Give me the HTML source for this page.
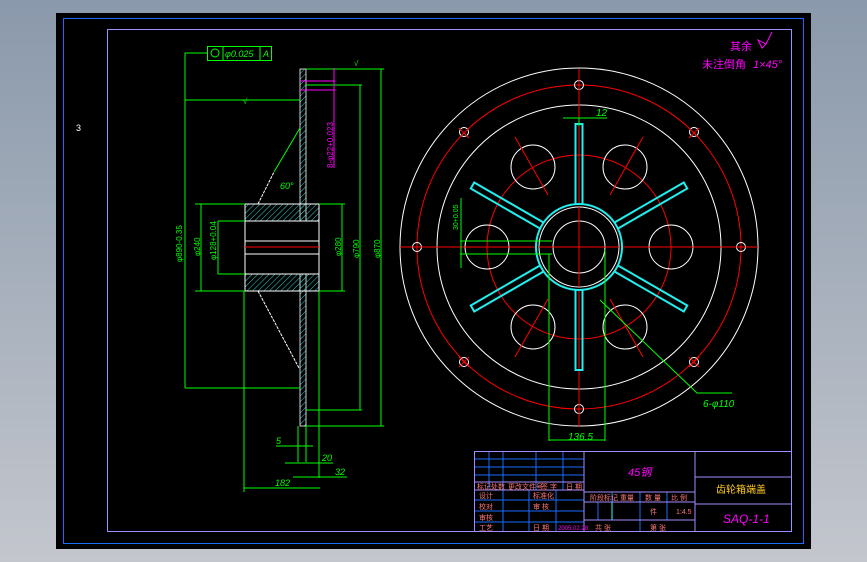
<!DOCTYPE html>
<html><head><meta charset="utf-8"><style>
html,body{margin:0;padding:0}
body{width:867px;height:562px;overflow:hidden;background:linear-gradient(#8a99ab,#c3c6cd)}
svg{position:absolute;left:0;top:0}
text{font-family:"Liberation Sans","Noto Sans CJK SC",sans-serif}
</style></head><body>
<svg width="867" height="562" viewBox="0 0 867 562">
<defs>
<pattern id="h" width="4" height="4" patternUnits="userSpaceOnUse" patternTransform="rotate(45)">
<line x1="0" y1="0" x2="0" y2="4" stroke="#3cc" stroke-width="1"/></pattern>
</defs>
<rect x="56" y="13" width="755" height="536" fill="#000"/>
<rect x="63.5" y="18.5" width="740" height="525" fill="none" stroke="#1a6cff" stroke-width="1"/>
<rect x="107.5" y="29.5" width="684" height="502" fill="none" stroke="#a28cff" stroke-width="1"/>
<text x="76" y="131" fill="#fff" font-size="9">3</text>

<!-- notes -->
<text x="730" y="50" fill="#f0f" font-size="11">其余</text>
<path d="M758 40 l4 8 l4 -4 z M766 44 l6 -12" stroke="#f0f" fill="none"/>
<text x="702" y="68" fill="#f0f" font-size="11">未注倒角</text>
<text x="753" y="68" fill="#f0f" font-size="11" font-style="italic">1×45°</text>

<!-- RIGHT VIEW -->
<g fill="none">
<circle cx="579" cy="247" r="179" stroke="#fff"/>
<circle cx="579" cy="247" r="162" stroke="#f00"/>
<circle cx="579" cy="247" r="142" stroke="#fff"/>
<circle cx="579" cy="247" r="92" stroke="#f00"/>
<g stroke="#fff">
<circle cx="671" cy="247" r="22"/><circle cx="487" cy="247" r="22"/>
<circle cx="533" cy="167" r="22"/><circle cx="625" cy="167" r="22"/>
<circle cx="533" cy="327" r="22"/><circle cx="625" cy="327" r="22"/>
<circle cx="579" cy="85" r="4.5"/><circle cx="579" cy="409" r="4.5"/>
<circle cx="417" cy="247" r="4.5"/><circle cx="741" cy="247" r="4.5"/>
<circle cx="464" cy="132" r="4.5"/><circle cx="694" cy="132" r="4.5"/>
<circle cx="464" cy="362" r="4.5"/><circle cx="694" cy="362" r="4.5"/>
</g>
<g stroke="#f00">
<line x1="400" y1="247" x2="758" y2="247"/>
<line x1="579" y1="69" x2="579" y2="427"/>
<line x1="515" y1="137" x2="548" y2="195"/>
<line x1="643" y1="137" x2="610" y2="195"/>
<line x1="515" y1="357" x2="548" y2="299"/>
<line x1="643" y1="357" x2="610" y2="299"/>
<path d="M459 128 l10 10 M469 128 l-10 10 M689 128 l10 10 M699 128 l-10 10 M459 357 l10 10 M469 357 l-10 10 M689 357 l10 10 M699 357 l-10 10"/>
</g>
<g stroke="#2ee" stroke-width="2">
<g transform="translate(579 247)">
<rect x="40" y="-3.5" width="83" height="7" transform="rotate(-90)"/>
<rect x="40" y="-3.5" width="83" height="7" transform="rotate(90)"/>
<rect x="40" y="-3.5" width="83" height="7" transform="rotate(-30)"/>
<rect x="40" y="-3.5" width="83" height="7" transform="rotate(30)"/>
<rect x="40" y="-3.5" width="83" height="7" transform="rotate(150)"/>
<rect x="40" y="-3.5" width="83" height="7" transform="rotate(210)"/>
</g>
<circle cx="579" cy="247" r="43" fill="#000"/>
</g>
<circle cx="579" cy="247" r="40" stroke="#fff"/>
<circle cx="579" cy="247" r="26" stroke="#fff"/>
<line x1="539" y1="247" x2="619" y2="247" stroke="#f00"/>
<line x1="579" y1="207" x2="579" y2="287" stroke="#f00"/>
<g stroke="#0f0">
<path d="M460 241 H552 M460 254 H552 M461 198 V268"/>
<path d="M549 254 V441 M605 250 V441 M549 440 H605"/>
<path d="M563 118 H607 M579 118 V126"/>
<path d="M600 300 L697 393 H732"/>
</g>
</g>
<text x="568" y="440" fill="#0f0" font-size="10" font-style="italic">136.5</text>
<text x="596" y="116" fill="#0f0" font-size="10" font-style="italic">12</text>
<text x="703" y="407" fill="#0f0" font-size="10" font-style="italic">6-φ110</text>
<text transform="translate(458 230) rotate(-90)" fill="#0f0" font-size="7">30+0.05</text>

<!-- LEFT VIEW -->
<g fill="none">
<rect x="300" y="69" width="6" height="357" fill="url(#h)" stroke="#fff" stroke-width="0.8"/>
<rect x="245" y="204" width="74" height="17" fill="url(#h)" stroke="#fff"/>
<rect x="245" y="274" width="74" height="17" fill="url(#h)" stroke="#fff"/>
<rect x="245" y="221" width="74" height="53" fill="#000" stroke="#fff"/>
<path d="M245 241 H319 M245 254 H319" stroke="#fff"/>
<line x1="245" y1="247" x2="319" y2="247" stroke="#f00"/>
<path d="M258 204 L274 172 M258 291 L299 368" stroke="#fff" stroke-dasharray="3 1"/>
<g stroke="#0f0">
<path d="M274 172 L300 128"/>
<path d="M207 53 H185 V388 M185 100 H300 M185 388 H300"/>
<path d="M201 204 V291 M195 204 H245 M195 291 H245"/>
<path d="M218 221 V274 M218 221 H245 M218 274 H245"/>
<path d="M342 204 V291 M319 204 H345 M319 291 H345"/>
<path d="M360 85 V410 M306 85 H362 M306 410 H362"/>
<path d="M381 69 V426 M306 69 H384 M306 426 H384"/>
<path d="M244 291 V492 M319 291 V478 M244 488 H320"/>
<path d="M298 426 V462 M306 426 V462"/>
<path d="M276 446 H313 M285 463 H333 M293 477 H347"/>
<rect x="207.5" y="46.5" width="64" height="14"/>
<path d="M223 47 V60 M260 47 V60"/>
</g>
<path d="M300 81 H335 M300 90 H335 M334 68 V168" stroke="#f0f"/>
</g>
<text x="225" y="57" fill="#0f0" font-size="9" font-style="italic">φ0.025</text>
<text x="263" y="57" fill="#0f0" font-size="9" font-style="italic">A</text>
<circle cx="215" cy="53" r="4" fill="none" stroke="#0f0"/>
<text x="243" y="104" fill="#0f0" font-size="8">√</text>
<text x="354" y="66" fill="#0f0" font-size="8">√</text>
<text x="280" y="189" fill="#0f0" font-size="9" font-style="italic">60°</text>
<text transform="translate(182 262) rotate(-90)" fill="#0f0" font-size="8">φ890-0.35</text>
<text transform="translate(200 256) rotate(-90)" fill="#0f0" font-size="8">φ240</text>
<text transform="translate(216 260) rotate(-90)" fill="#0f0" font-size="8">φ128+0.04</text>
<text transform="translate(341 256) rotate(-90)" fill="#0f0" font-size="8">φ280</text>
<text transform="translate(359 258) rotate(-90)" fill="#0f0" font-size="8">φ790</text>
<text transform="translate(380 258) rotate(-90)" fill="#0f0" font-size="8">φ870</text>
<text transform="translate(333 168) rotate(-90)" fill="#f0f" font-size="8">8-φ22+0.023</text>
<text x="276" y="444" fill="#0f0" font-size="9" font-style="italic">5</text>
<text x="322" y="461" fill="#0f0" font-size="9" font-style="italic">20</text>
<text x="335" y="475" fill="#0f0" font-size="9" font-style="italic">32</text>
<text x="275" y="486" fill="#0f0" font-size="9" font-style="italic">182</text>

<!-- TITLE BLOCK -->
<g fill="none" stroke-width="1">
<g stroke="#1a6cff">
<path d="M474 459 H584 M474 467 H584 M474 475 H584 M474 500 H584 M474 511 H584 M474 522 H584"/>
<path d="M489 451 V490 M503 451 V532 M536 451 V490 M563 451 V490 M529 490 V532 M556 490 V532"/>
<path d="M598 502 V520 M640 492 V532 M667 492 V520 M612 492 V502"/>
</g>
<line x1="612" y1="502" x2="612" y2="520" stroke="#2ff"/>
<g stroke="#a28cff">
<rect x="474.5" y="451.5" width="317" height="80"/>
<path d="M474 482 H584 M474 490 H584 M584 451 V532 M695 451 V532 M584 492 H695 M584 502 H695 M584 520 H695 M695 477 H791 M695 504 H791"/>
</g>
</g>
<g fill="#f77" font-size="7">
<text x="477" y="489">标记</text><text x="491" y="489">处数</text><text x="508" y="489">更改文件号</text><text x="541" y="489">签 字</text><text x="566" y="489">日 期</text>
<text x="479" y="498">设计</text><text x="533" y="498">标准化</text>
<text x="479" y="509">校对</text><text x="533" y="509">审 核</text>
<text x="479" y="520">审核</text>
<text x="479" y="530">工艺</text><text x="533" y="530">日 期</text>
<text x="590" y="500">阶段标记</text><text x="620" y="500">重量</text><text x="645" y="500">数 量</text><text x="671" y="500">比 例</text>
<text x="650" y="514">件</text><text x="676" y="514">1:4.5</text>
<text x="595" y="530">共 张</text><text x="650" y="530">第 张</text>
</g>
<text x="558" y="530" fill="#f0f" font-size="6">2005.02.28</text>
<text x="628" y="476" fill="#f0f" font-size="11" font-style="italic">45钢</text>
<text x="716" y="493" fill="#fc2" font-size="10">齿轮箱端盖</text>
<text x="723" y="523" fill="#f0f" font-size="12" font-style="italic">SAQ-1-1</text>
</svg>
</body></html>
